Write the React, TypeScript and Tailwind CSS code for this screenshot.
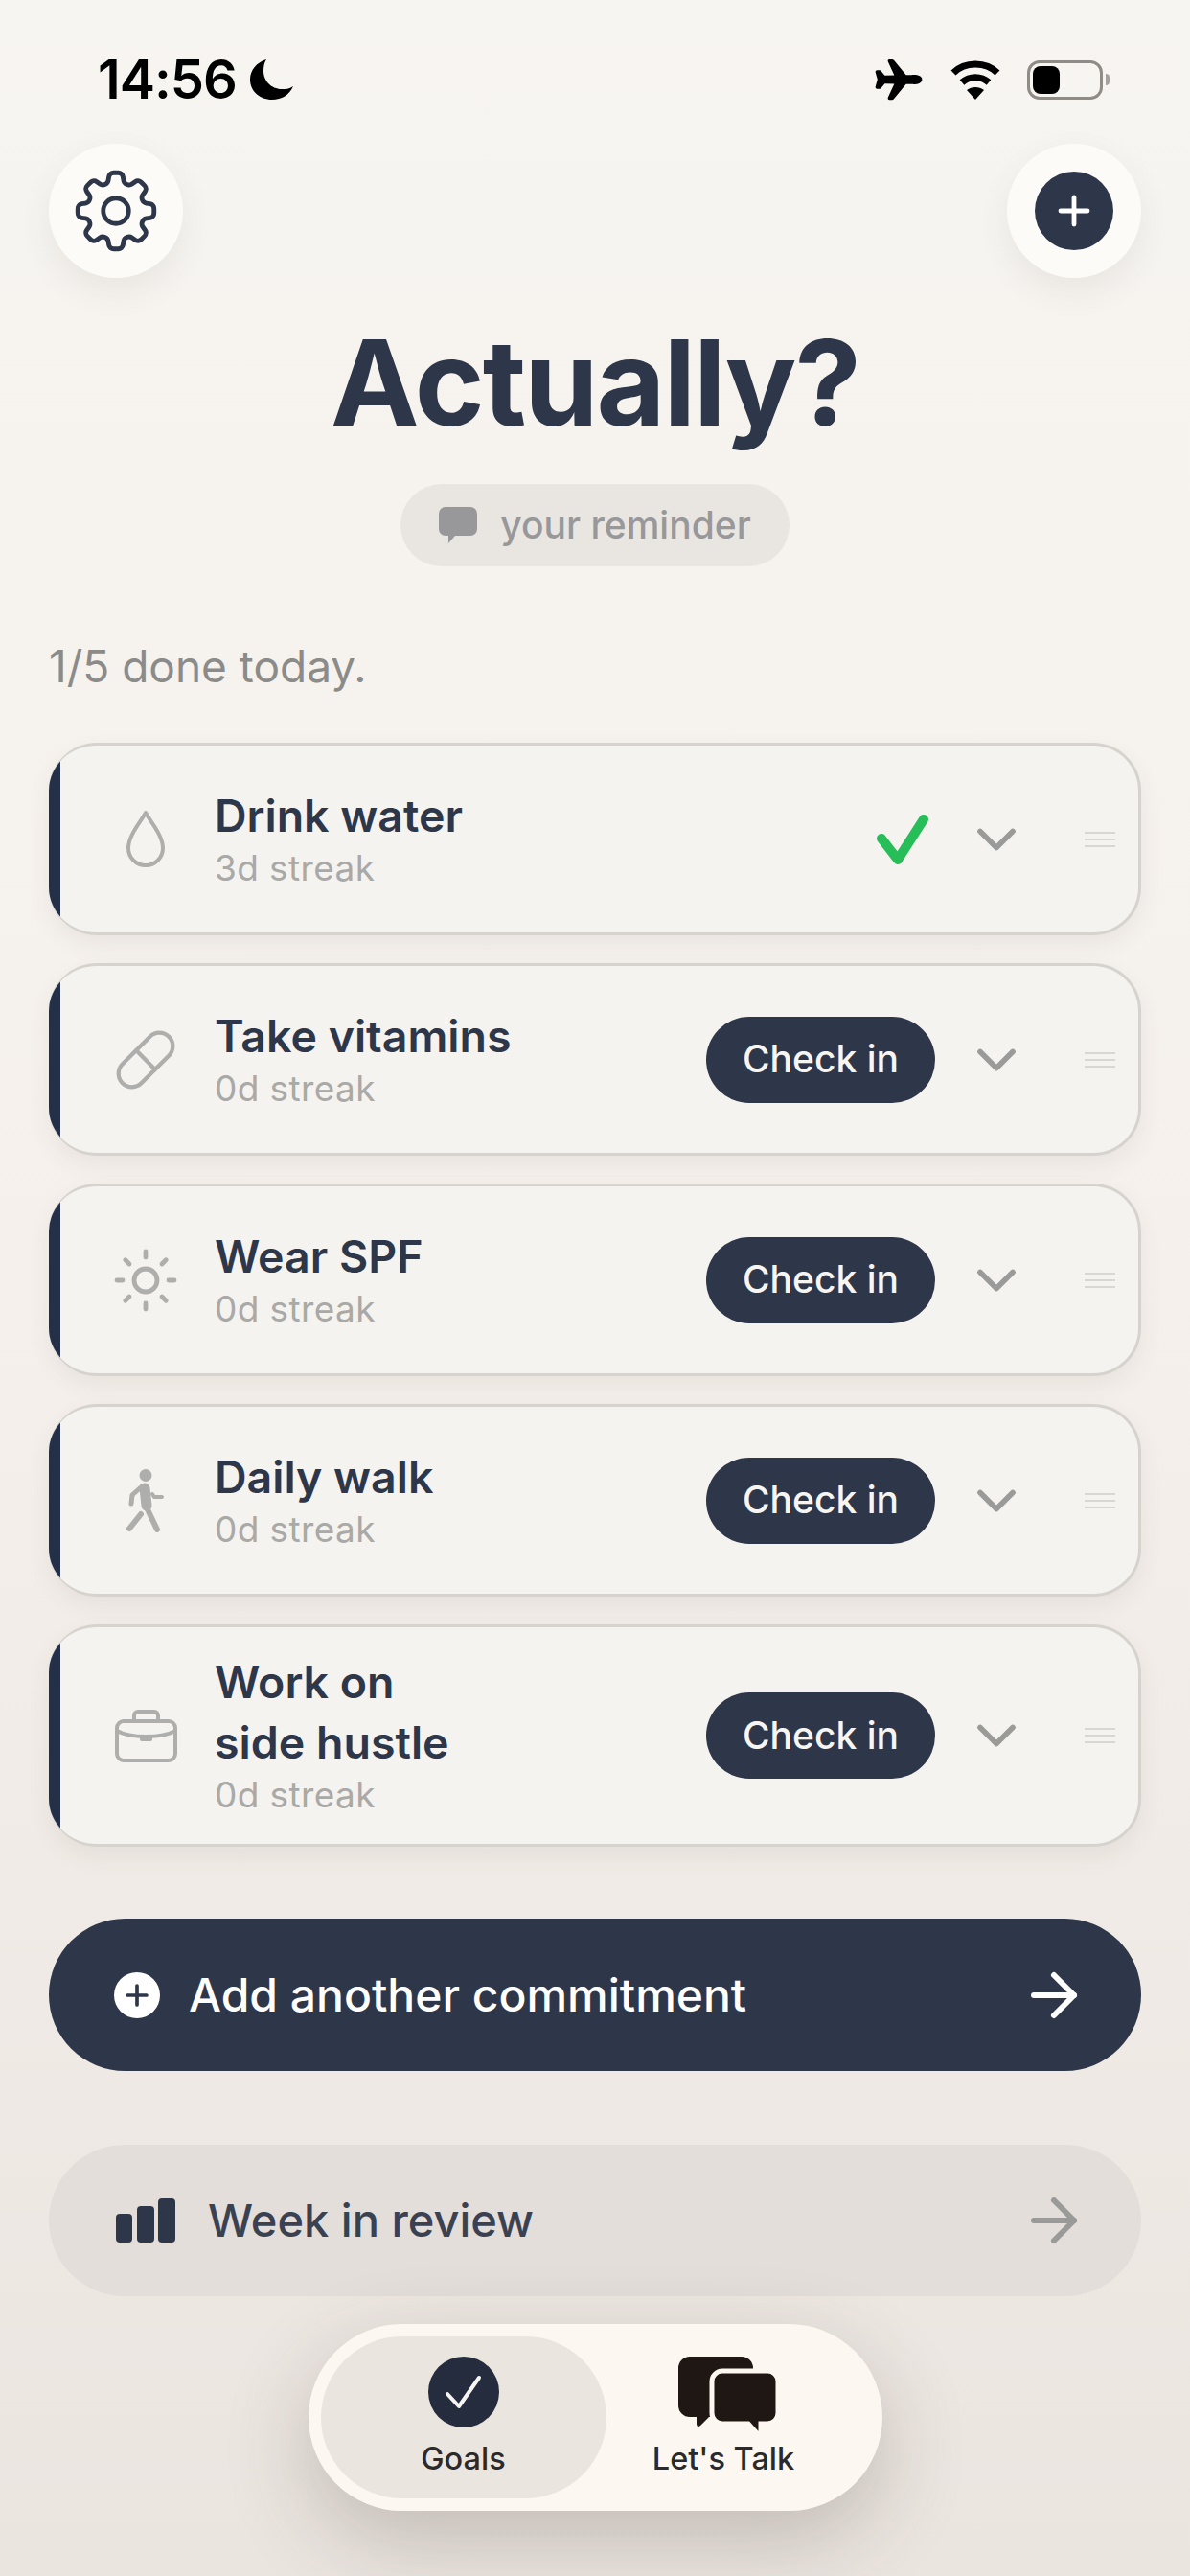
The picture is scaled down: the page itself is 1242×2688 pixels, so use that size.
import { ArrowRight, ChevronDown, Pill, Plus, Sun } from "lucide-react";
import { HiOutlineCog8Tooth } from "react-icons/hi2";
import { IoAirplane } from "react-icons/io5";
import type { ReactNode } from "react";

const font = { fontFamily: "Inter, 'Noto Sans', sans-serif" };

function DropIcon() {
  return (
    <svg width="42" height="62" viewBox="0 0 42 62" fill="none" stroke="currentColor" strokeWidth="4">
      <path d="M21 3C15 14 3 27 3 40a18 18 0 0 0 36 0C39 27 27 14 21 3z" strokeLinejoin="round" />
    </svg>
  );
}

function WalkIcon() {
  return (
    <svg width="40" height="66" viewBox="0 0 40 66" fill="none" stroke="currentColor" strokeLinecap="round" strokeLinejoin="round">
      <circle cx="20" cy="6.5" r="6.5" fill="currentColor" stroke="none" />
      <path d="M19 20l2 18" strokeWidth="11" />
      <path d="M15 19L6 27l-1 9" strokeWidth="5" />
      <path d="M27 26l2 3h8" strokeWidth="4" />
      <path d="M21 40l11 23" strokeWidth="6" />
      <path d="M15 47L3 62" strokeWidth="6" />
    </svg>
  );
}

function CaseIcon() {
  return (
    <svg width="65" height="56" viewBox="0 0 65 56" fill="none" stroke="currentColor" strokeWidth="4">
      <rect x="2" y="13" width="61" height="41" rx="7" />
      <path d="M20 13V7a4 4 0 0 1 4-4h17a4 4 0 0 1 4 4v6" />
      <path d="M2 23c14 8 47 8 61 0" />
      <rect x="26" y="27" width="13" height="7" rx="2" fill="currentColor" stroke="none" />
    </svg>
  );
}

function StatusBar() {
  return (
    <div className="flex items-center justify-between h-[150px] pl-[102px] pr-[84px] pt-[16px] text-black">
      <div className="flex items-center gap-[14px]">
        <span className="text-[56px] font-semibold leading-none tracking-[-1px]">14:56</span>
        <svg width="45" height="42" viewBox="0 0 45 42" fill="currentColor">
          <path d="M17 0C7 3 0 11 0 21c0 12 10 21 23 21 10 0 18-5 22-14-4 3-8 3-12 3-11 0-19-9-19-19 0-5 1-9 3-12z" />
        </svg>
      </div>
      <div className="flex items-center gap-[27px]">
        <IoAirplane size={52} />
        <svg width="54" height="41" viewBox="0 0 54 41" fill="none" stroke="currentColor" strokeWidth="7">
          <path d="M4 13C16 1 38 1 50 13" />
          <path d="M13 23c8-7 20-7 28 0" />
          <path d="M27 41l-9-10c5-4 13-4 18 0z" fill="currentColor" stroke="none" />
        </svg>
        <div className="flex items-center gap-[3px]">
          <div className="w-[79px] h-[41px] rounded-[13px] border-[3px] border-[#8f8c88] p-[3px]">
            <div className="w-[28px] h-full rounded-[8px] bg-black" />
          </div>
          <div className="w-[4px] h-[12px] rounded-r-full bg-[#a5a29e]" />
        </div>
      </div>
    </div>
  );
}

type Habit = {
  name: ReactNode;
  streak: string;
  icon: ReactNode;
  done?: boolean;
  tall?: boolean;
};

const habits: Habit[] = [
  { name: "Drink water", streak: "3d streak", icon: <DropIcon />, done: true },
  { name: "Take vitamins", streak: "0d streak", icon: <Pill size={68} strokeWidth={1.5} /> },
  { name: "Wear SPF", streak: "0d streak", icon: <Sun size={72} strokeWidth={1.6} /> },
  { name: "Daily walk", streak: "0d streak", icon: <WalkIcon /> },
  {
    name: (
      <>
        Work on
        <br />
        side hustle
      </>
    ),
    streak: "0d streak",
    icon: <CaseIcon />,
    tall: true,
  },
];

function HabitCard({ habit }: { habit: Habit }) {
  return (
    <div
      className={`flex items-center overflow-hidden rounded-[50px] border-y-[3px] border-r-[3px] border-[#d6d3ce] bg-[#f5f3ef] shadow-[0_10px_24px_rgba(90,70,60,0.07)] pr-[24px] ${
        habit.tall ? "h-[232px]" : "h-[201px]"
      }`}
    >
      <div className="w-[12px] self-stretch -my-[3px] shrink-0 bg-[#243048]" />
      <div className="flex w-[161px] shrink-0 items-center justify-center pl-[17px] text-[#aeaeac]">{habit.icon}</div>
      <div className="flex-1 min-w-0 pb-[3px]">
        <div className="text-[46.5px] font-semibold leading-[63px] text-[#2e3749]">{habit.name}</div>
        <div className="mt-[1px] text-[37px] leading-[44px] text-[#a9a9a7] tracking-[0.4px]">{habit.streak}</div>
      </div>
      {habit.done ? (
        <svg width="56" height="54" viewBox="0 0 56 54" fill="none" stroke="#27bd58" strokeWidth="10" strokeLinecap="round" strokeLinejoin="round" className="mr-[6px]">
          <path d="M6 26l17 22L50 6" />
        </svg>
      ) : (
        <button className="h-[90px] w-[239px] rounded-full bg-[#2e3749] text-[39px] font-medium text-[#f7f5f2]">Check in</button>
      )}
      <ChevronDown size={68} strokeWidth={2} className="ml-[30px] text-[#9a9a98]" />
      <div className="ml-[58px] flex w-[32px] flex-col gap-[5px]">
        <div className="h-[2px] bg-[#d9d7d3]" />
        <div className="h-[2px] bg-[#d9d7d3]" />
        <div className="h-[2px] bg-[#d9d7d3]" />
      </div>
    </div>
  );
}

export default function App() {
  return (
    <div
      style={font}
      className="flex h-[2688px] w-[1242px] flex-col overflow-hidden bg-gradient-to-b from-[#f7f5f1] via-[#f5f0ec] to-[#ebe5e0]"
    >
      <StatusBar />

      <div className="flex items-center justify-between px-[51px]">
        <button className="flex h-[140px] w-[140px] items-center justify-center rounded-full bg-[#fdfbf8] text-[#2e3749] shadow-[0_14px_34px_rgba(80,70,60,0.08)]">
          <HiOutlineCog8Tooth size={106} strokeWidth={1.1} />
        </button>
        <button className="flex h-[140px] w-[140px] items-center justify-center rounded-full bg-[#fdfbf8] shadow-[0_14px_34px_rgba(80,70,60,0.08)]">
          <span className="flex h-[82px] w-[82px] items-center justify-center rounded-full bg-[#2e3749] text-white">
            <Plus size={48} strokeWidth={2.4} />
          </span>
        </button>
      </div>

      <h1 className="mt-[29px] text-center text-[124px] font-bold leading-[160px] tracking-[-2px] text-[#2e3749]">Actually?</h1>

      <div className="mt-[26px] flex justify-center">
        <div className="flex h-[86px] w-[406px] items-center justify-center gap-[24px] rounded-full bg-[#e9e6e2] text-[#98989a]">
          <svg width="40" height="38" viewBox="0 0 40 38" fill="currentColor">
            <path d="M7 0h26a7 7 0 0 1 7 7v16a7 7 0 0 1-7 7H17l-7 8v-8H7a7 7 0 0 1-7-7V7a7 7 0 0 1 7-7z" />
          </svg>
          <span className="text-[39px] font-medium">your reminder</span>
        </div>
      </div>

      <p className="mt-[76px] px-[51px] text-[46px] leading-[56px] text-[#8b8b89]">1/5 done today.</p>

      <div className="mt-[52px] flex flex-col gap-[29px] px-[51px]">
        {habits.map((habit) => (
          <HabitCard key={habit.streak + String(habit.name)} habit={habit} />
        ))}
      </div>

      <div className="mt-[75px] px-[51px]">
        <button className="flex h-[159px] w-full items-center rounded-full bg-[#2e3749] pl-[68px] pr-[55px] text-white">
          <span className="flex h-[48px] w-[48px] items-center justify-center rounded-full bg-white text-[#2e3749]">
            <Plus size={34} strokeWidth={2.6} />
          </span>
          <span className="ml-[30px] flex-1 text-left text-[48px] font-medium">Add another commitment</span>
          <ArrowRight size={72} strokeWidth={2} />
        </button>
      </div>

      <div className="mt-[77px] px-[51px]">
        <button className="flex h-[158px] w-full items-center rounded-full bg-[#e3deda] pl-[70px] pr-[55px] text-[#3a4252]">
          <svg width="62" height="46" viewBox="0 0 62 46" fill="#2e3749">
            <rect x="0" y="16" width="17" height="30" rx="4" />
            <rect x="22" y="8" width="18" height="38" rx="4" />
            <rect x="44" y="0" width="18" height="46" rx="4" />
          </svg>
          <span className="ml-[34px] flex-1 text-left text-[47px] font-medium">Week in review</span>
          <ArrowRight size={72} strokeWidth={2} className="text-[#9a9a98]" />
        </button>
      </div>

      <div className="mt-[29px] flex justify-center">
        <div className="flex h-[195px] w-[599px] items-center rounded-full bg-[#fdf7f2] p-[13px] shadow-[0_30px_90px_rgba(60,50,40,0.24)]">
          <div className="flex h-[169px] w-[298px] flex-col items-center justify-center gap-[13px] rounded-full bg-[#ebe5df]">
            <svg width="74" height="74" viewBox="0 0 74 74" fill="none">
              <circle cx="37" cy="37" r="37" fill="#242c3d" />
              <path d="M20 39l12 13 21-30" stroke="#f7f5f2" strokeWidth="4" strokeLinecap="round" strokeLinejoin="round" />
            </svg>
            <span className="text-[32.5px] font-medium leading-[40px] text-[#2a2a2c]">Goals</span>
          </div>
          <div className="flex h-[169px] flex-1 flex-col items-center justify-center gap-[5px] pr-[30px]">
            <svg width="104" height="82" viewBox="0 0 104 82" fill="#1e1713" className="ml-[10px]">
              <path d="M12 0h54a12 12 0 0 1 12 12v39a12 12 0 0 1-12 12H32l-9 9c-2 2-4 1-4-2v-7h-7A12 12 0 0 1 0 51V12A12 12 0 0 1 12 0z" />
              <path d="M46 15h47a11 11 0 0 1 11 11v33a11 11 0 0 1-11 11h-7v9c0 3-2 3-4 1l-9-10H46a11 11 0 0 1-11-11V26a11 11 0 0 1 11-11z" stroke="#fdf7f2" strokeWidth="5" />
            </svg>
            <span className="text-[32.5px] font-medium leading-[40px] text-[#2a2a2c]">Let's Talk</span>
          </div>
        </div>
      </div>
    </div>
  );
}
